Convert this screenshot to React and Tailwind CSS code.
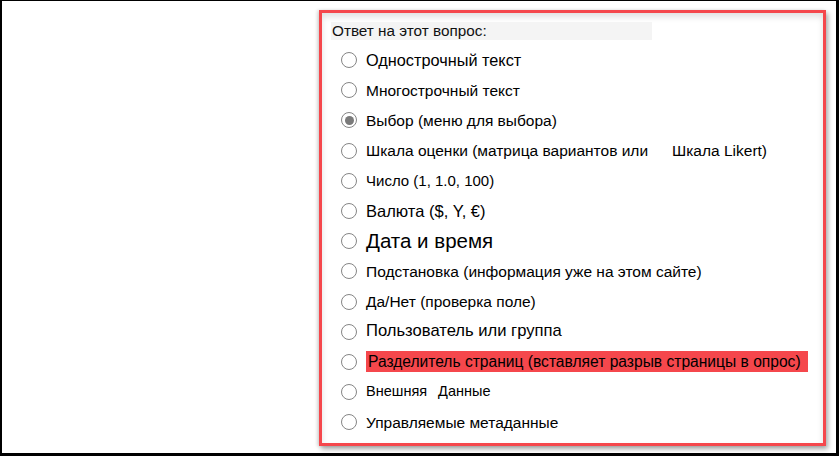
const items = [
  { label: "Однострочный текст", size: "text-[16.3px]" },
  { label: "Многострочный текст", size: "text-[15.5px]" },
  { label: "Выбор (меню для выбора)", size: "text-[15.5px]", checked: true },
  { label: "Шкала оценки (матрица вариантов или", extra: "Шкала Likert)", size: "text-[15.5px]" },
  { label: "Число (1, 1.0, 100)", size: "text-[15px]" },
  { label: "Валюта ($, Y, €)", size: "text-[16.5px]" },
  { label: "Дата и время", size: "text-[20.5px]" },
  { label: "Подстановка (информация уже на этом сайте)", size: "text-[15.5px]" },
  { label: "Да/Нет (проверка поле)", size: "text-[15.5px]" },
  { label: "Пользователь или группа", size: "text-[16.6px]" },
  { label: "Разделитель страниц (вставляет разрыв страницы в опрос)", size: "text-[15.6px]", highlight: true },
  { label: "Внешняя", extra2: "Данные", size: "text-[14.5px]" },
  { label: "Управляемые метаданные", size: "text-[15.5px]" },
];

function Radio({ checked }) {
  return (
    <span className="flex items-center justify-center w-[16px] h-[16px] rounded-full border-[1.5px] border-[#858585] bg-white shrink-0">
      {checked && <span className="w-[9px] h-[9px] rounded-full bg-[#7a7a7a]" />}
    </span>
  );
}

export default function App() {
  return (
    <div
      className="w-[839px] h-[456px] bg-white border-t border-l-2 border-r-[3px] border-b-[3px] border-black overflow-hidden"
      style={{ fontFamily: '"Liberation Sans", Arial, sans-serif' }}
    >
      <div className="ml-[317px] mt-[9px] w-[507px] h-[436px] border-[3.5px] border-[#f5474c] bg-white shadow-[-2px_0_3px_rgba(0,0,0,0.12),2px_3px_5px_rgba(0,0,0,0.35),inset_0_4px_6px_rgba(0,0,0,0.12)] pl-[9px] pt-[9px]">
        <div className="w-[321px] h-[18px] bg-[#f4f4f4] text-[15.3px] leading-[18px] text-[#111] pl-[1px]">
          Ответ на этот вопрос:
        </div>
        <div className="mt-[5px] flex flex-col">
          {items.map((it) => (
            <div key={it.label} className="h-[30.2px] flex items-center pl-[10px]">
              <Radio checked={it.checked} />
              <span
                className={`ml-[9px] text-black whitespace-nowrap ${it.size} ${
                  it.highlight ? "bg-[#f5474c] pl-[2px] pr-[4px] w-[442px] leading-[21px]" : ""
                }`}
              >
                {it.label}
                {it.extra && <span className="ml-[24px]">{it.extra}</span>}
                {it.extra2 && <span className="ml-[11px]">{it.extra2}</span>}
              </span>
            </div>
          ))}
        </div>
      </div>
    </div>
  );
}
